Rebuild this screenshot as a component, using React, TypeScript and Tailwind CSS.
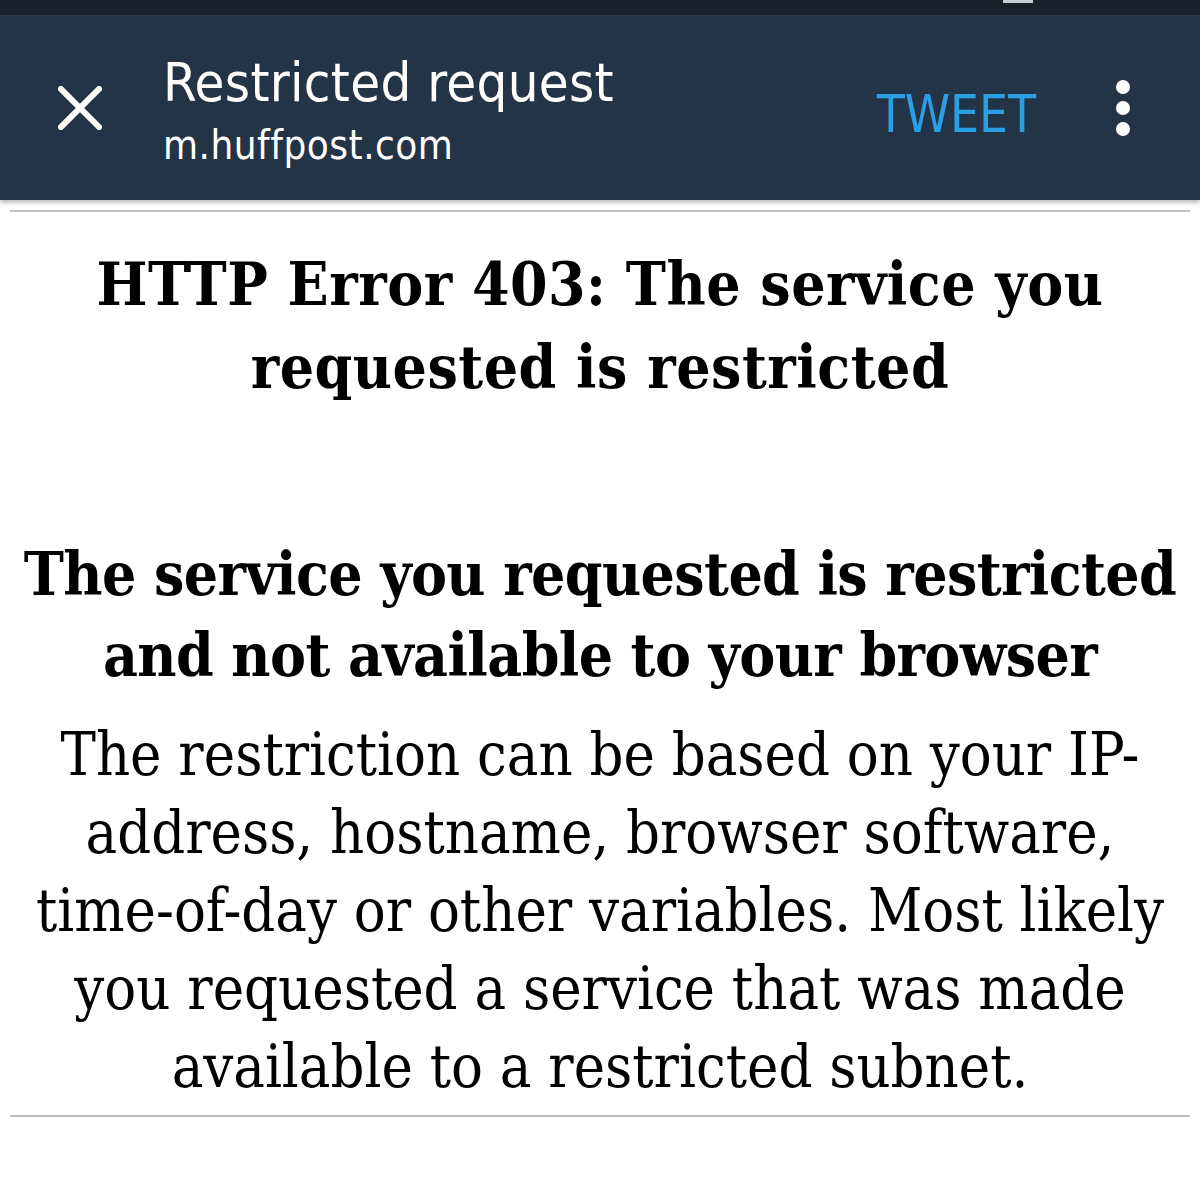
import React from 'react';

const serif = { fontFamily: '"DejaVu Serif Condensed", "DejaVu Serif", "Liberation Serif", serif' };
const cond = { fontFamily: '"DejaVu Sans Condensed", "DejaVu Sans", sans-serif', fontStretch: 'condensed' as const };

const Lines: React.FC<{ lines: string[] }> = ({ lines }) => (
  <>
    {lines.map((l, i) => (
      <span key={i} className="block whitespace-nowrap">{l}</span>
    ))}
  </>
);

const App: React.FC = () => {
  return (
    <div className="w-[1200px] h-[1183px] bg-white overflow-hidden">
      {/* status bar */}
      <div className="h-[15px] bg-[#19212c] relative">
        <div className="absolute left-[1003px] top-0 w-[30px] h-[3px] bg-[#c9ced6]" />
      </div>

      {/* toolbar */}
      <div className="h-[185px] bg-[#243447] flex items-center shadow-[0_3px_4px_rgba(0,0,0,0.25)] relative z-10" style={cond}>
        <div className="w-[163px] flex justify-start pl-[58px]">
          <svg width="44" height="44" viewBox="0 0 44 44">
            <path d="M3 3 L41 41 M41 3 L3 41" stroke="#ffffff" strokeWidth="6" strokeLinecap="square" />
          </svg>
        </div>
        <div className="flex-1 flex flex-col text-white mt-[6px]">
          <span className="text-[54px] leading-[60px] tracking-[0.3px]">Restricted request</span>
          <span className="text-[40px] leading-[48px] tracking-[0.5px] mt-[8px]">m.huffpost.com</span>
        </div>
        <span className="text-[#2a9fe3] text-[51px] leading-none mr-[80px] mt-[14px]">TWEET</span>
        <div className="flex flex-col gap-[7px] mr-[70px]">
          <span className="w-[14px] h-[14px] rounded-full bg-white" />
          <span className="w-[14px] h-[14px] rounded-full bg-white" />
          <span className="w-[14px] h-[14px] rounded-full bg-white" />
        </div>
      </div>

      {/* content */}
      <div className="px-[10px] pt-[10px]" style={serif}>
        <div className="h-[2px] bg-[#bdbdbd]" />
        <h1 className="mt-[31px] text-center font-bold text-black text-[60px] leading-[83px] tracking-[0.5px]">
          <Lines lines={['HTTP Error 403: The service you', 'requested is restricted']} />
        </h1>
        <h2 className="mt-[125px] text-center font-bold text-black text-[60px] leading-[81px] tracking-[-0.6px]">
          <Lines lines={['The service you requested is restricted', 'and not available to your browser']} />
        </h2>
        <p className="mt-[20px] text-center text-black text-[59px] leading-[78px]">
          <Lines
            lines={[
              'The restriction can be based on your IP-',
              'address, hostname, browser software,',
              'time-of-day or other variables. Most likely',
              'you requested a service that was made',
              'available to a restricted subnet.',
            ]}
          />
        </p>
        <div className="mt-[9px] h-[2px] bg-[#bdbdbd]" />
      </div>
    </div>
  );
};

export default App;
